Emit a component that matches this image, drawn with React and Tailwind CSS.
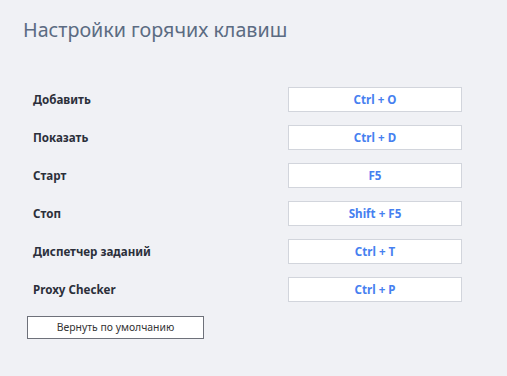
import React from 'react';

const shortcuts = [
  { label: 'Добавить', keys: 'Ctrl + O' },
  { label: 'Показать', keys: 'Ctrl + D' },
  { label: 'Старт', keys: 'F5' },
  { label: 'Стоп', keys: 'Shift + F5' },
  { label: 'Диспетчер заданий', keys: 'Ctrl + T' },
  { label: 'Proxy Checker', keys: 'Ctrl + P' },
];

const App = () => {
  return (
    <div
      className="w-[507px] h-[376px] bg-[#f0f1f5] overflow-hidden"
      style={{ fontFamily: '"Noto Sans", "Open Sans", sans-serif' }}
    >
      {/* Header */}
      <h1 className="pl-[23px] pt-[16px] text-[19.7px] leading-[28px] text-[#5b6b82] font-normal">
        Настройки горячих клавиш
      </h1>

      {/* Shortcut rows */}
      <div className="mt-[43px] flex flex-col gap-[13px]">
        {shortcuts.map((item) => (
          <div key={item.label} className="flex items-center h-[25px]">
            <div className="w-[288px] pl-[33px] text-[11.6px] font-bold text-[#2b2f3a]">
              {item.label}
            </div>
            <div className="w-[174px] h-[25px] bg-white border border-[#d2d5dc] flex items-center justify-center text-[11.6px] font-bold text-[#4680f0]">
              {item.keys}
            </div>
          </div>
        ))}
      </div>

      {/* Reset button */}
      <div className="mt-[14px] pl-[27px]">
        <button className="w-[177px] h-[23px] bg-white border border-[#6e717a] text-[10.4px] text-[#333] flex items-center justify-center">
          Вернуть по умолчанию
        </button>
      </div>
    </div>
  );
};

export default App;
